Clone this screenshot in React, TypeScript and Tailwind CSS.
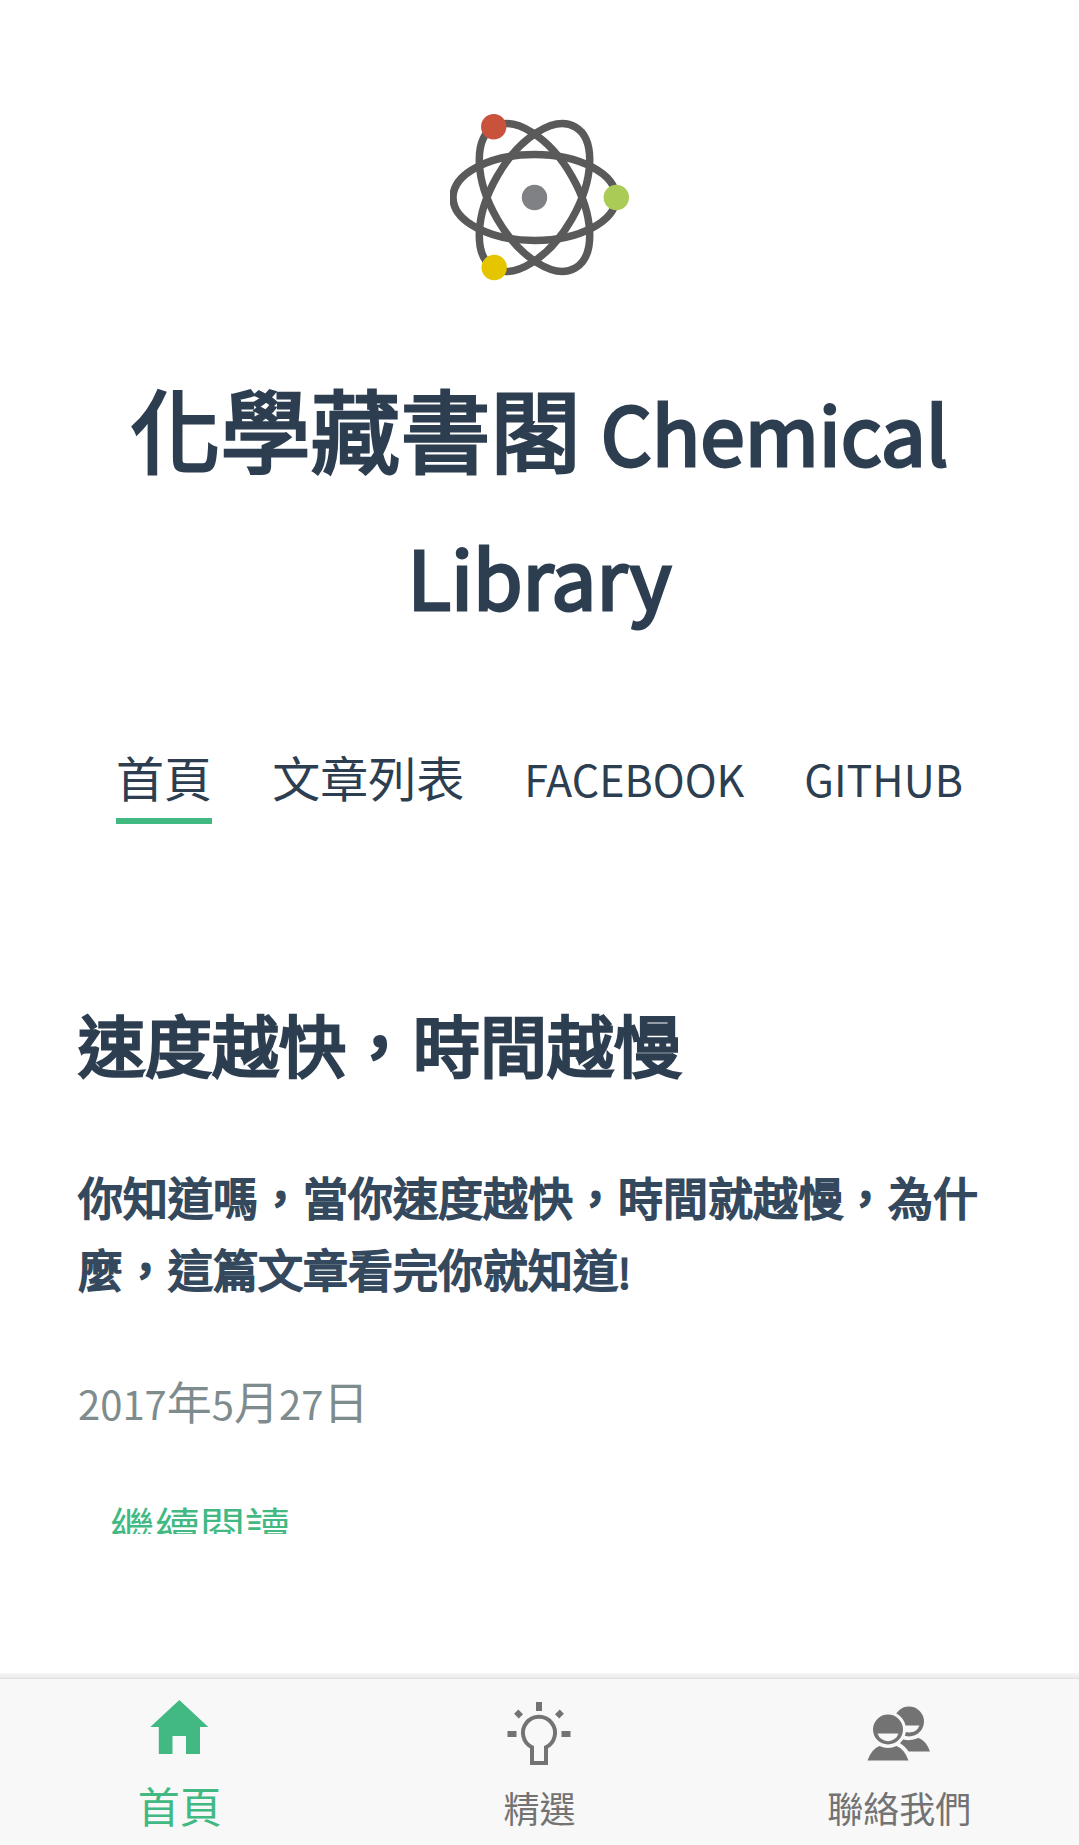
import React from "react";

function AtomLogo() {
  return (
    <svg viewBox="0 0 180 168" className="h-[168px] w-[180px]" aria-hidden="true">
      <g fill="none" stroke="#5a5a5a" strokeWidth="7.5">
        <ellipse cx="84.5" cy="83.5" rx="81.5" ry="43" />
        <ellipse cx="84.5" cy="83.5" rx="81.5" ry="43" transform="rotate(60 84.5 83.5)" />
        <ellipse cx="84.5" cy="83.5" rx="81.5" ry="43" transform="rotate(120 84.5 83.5)" />
      </g>
      <circle cx="84.5" cy="83.5" r="12.7" fill="#808184" />
      <circle cx="43.7" cy="12.7" r="12.7" fill="#c8523c" />
      <circle cx="166.3" cy="83.5" r="12.7" fill="#aacb56" />
      <circle cx="44.2" cy="153.5" r="12.7" fill="#e4c500" />
    </svg>
  );
}

function HomeIcon() {
  return (
    <svg viewBox="0 0 72 72" className="size-[72px]" fill="currentColor" aria-hidden="true">
      <path d="M35.300 9 64.300 36H56V63H42V45H28.500V63H14.800V36H6.300Z" />
    </svg>
  );
}

function BulbIcon() {
  return (
    <svg viewBox="0 0 72 72" className="size-[72px]" fill="currentColor" aria-hidden="true">
      <path d="M33 5h6v9h-6zM4.500 34h9v6h-9zM58.500 34h9v6h-9zM15.300 12.500l4.700 4.700-4.200 4.200-4.700-4.700zM56.700 12.500l4.200 4.200-4.700 4.700-4.200-4.200z" />
      <path d="M29 66V50.200A16 16 0 1 1 43 50.200V66Z" fill="none" stroke="currentColor" strokeWidth="4" />
    </svg>
  );
}

function PeopleIcon() {
  return (
    <svg viewBox="0 0 72 72" className="size-[72px]" fill="currentColor" aria-hidden="true">
      <circle cx="46" cy="24.500" r="15" />
      <path d="M36 28.500H56.500A11 11 0 0 1 36 28.500Z" fill="#f8f8f8" />
      <path d="M37 41.500Q46.500 45 55.500 41 63 43.500 67 54.500H38Z" />
      <circle cx="25" cy="32.500" r="18" fill="#f8f8f8" />
      <path d="M2 66Q5 52 14 46L36 46Q43 49 47 57V66Z" fill="#f8f8f8" />
      <circle cx="25" cy="32.500" r="15" />
      <path d="M14.500 36.500H35.500A11 11 0 0 1 14.500 36.500Z" fill="#f8f8f8" />
      <path d="M4.500 63.500Q8.500 52 16.500 49 25 53 33.500 49 41.500 52 45.500 63.500Z" />
    </svg>
  );
}

const tabs = [
  { label: "首頁", Icon: HomeIcon, active: true },
  { label: "精選", Icon: BulbIcon, active: false },
  { label: "聯絡我們", Icon: PeopleIcon, active: false },
];

export default function App() {
  return (
    <div className="flex min-h-screen flex-col bg-white font-['Noto_Sans_CJK_TC',sans-serif] text-[#2c3e50]">
      <header className="flex flex-col items-center px-[77px] pt-[114px]">
        <AtomLogo />
        <h1 className="mt-[73px] text-center text-[90px] leading-[144px] font-normal [-webkit-text-stroke:3px_currentColor]">
          化學藏書閣 <span className="text-[80px] leading-none">Chemical Library</span>
        </h1>
        <nav className="mt-[98px] flex items-start gap-[60px] text-[48px] leading-[70px]">
          <a href="#" aria-current="page" className="border-b-6 border-[#42b983] pb-[7px]">首頁</a>
          <a href="#">文章列表</a>
          <a href="#"><span className="text-[43px] leading-none">FACEBOOK</span></a>
          <a href="#"><span className="text-[43px] leading-none">GITHUB</span></a>
        </nav>
      </header>
      <main className="px-[78px] pt-[165px] text-[45px] leading-[72px]">
        <article>
          <h2 className="text-[67px] leading-[108px] [-webkit-text-stroke:3px_currentColor]">速度越快，時間越慢</h2>
          <p className="mt-16 text-[#34495e] [-webkit-text-stroke:2px_currentColor]">
            你知道嗎，當你速度越快，時間就越慢，為什麼，這篇文章看完你就知道<span className="text-[40px] leading-none">!</span>
          </p>
          <p className="mt-[60px] text-[#7f8c8d]">
            <span className="text-[40px] leading-none">2017</span>年<span className="text-[40px] leading-none">5</span>月<span className="text-[40px] leading-none">27</span>日
          </p>
          <div className="mt-[54px] h-[43px] overflow-hidden pl-8">
            <a href="#" className="text-[#42b983]">繼續閱讀</a>
          </div>
        </article>
      </main>
      <footer className="mt-auto">
        <div className="h-[5px] bg-gradient-to-b from-[#f6f6f6] to-[#ebebeb]" />
        <nav className="grid h-[167px] grid-cols-3 border-t border-[#e0e0e0] bg-[#f8f8f8]">
          {tabs.map(({ label, Icon, active }) => (
            <a
              key={label}
              href="#"
              aria-current={active ? "page" : undefined}
              className={
                active
                  ? "flex flex-col items-center gap-[6px] pt-3 text-[42px] leading-[72px] text-[#42b983]"
                  : "flex flex-col items-center gap-[2px] pt-[18px] text-[36px] leading-[72px] text-[#737373]"
              }
            >
              <Icon />
              <span>{label}</span>
            </a>
          ))}
        </nav>
      </footer>
    </div>
  );
}
